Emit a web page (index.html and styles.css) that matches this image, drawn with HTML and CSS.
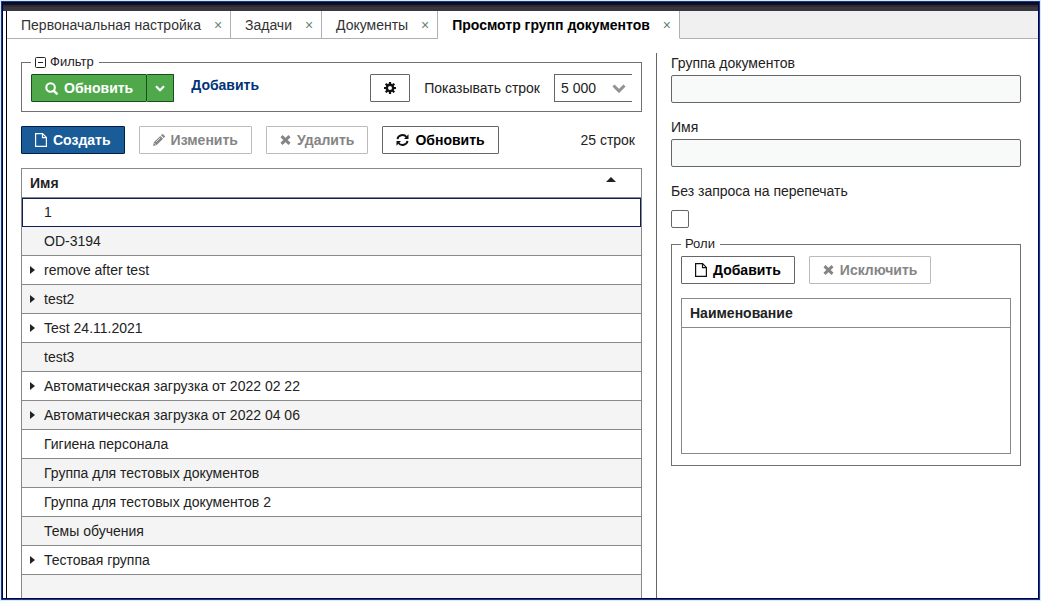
FILE: index.html
```html
<!DOCTYPE html>
<html lang="ru">
<head>
  <meta charset="UTF-8" />
  <meta name="viewport" content="width=device-width, initial-scale=1.0"/>
  <title>Просмотр групп документов</title>
  <link rel="stylesheet" href="styles.css">
</head>
<body>

<div class="window">
  <div class="titlebar"></div>

  <div class="content">
    <nav class="tabs">
      <div class="tab"><a href="#setup">Первоначальная настройка</a><button class="tab-close" aria-label="Закрыть">×</button></div>
      <div class="tab"><a href="#tasks">Задачи</a><button class="tab-close" aria-label="Закрыть">×</button></div>
      <div class="tab"><a href="#docs">Документы</a><button class="tab-close" aria-label="Закрыть">×</button></div>
      <div class="tab active"><a href="#groups">Просмотр групп документов</a><button class="tab-close" aria-label="Закрыть">×</button></div>
      <div class="tabs-rest"></div>
    </nav>

    <main class="main">
      <section class="list-panel">
        <fieldset class="box">
          <legend>
            <svg class="collapse" width="11" height="11" viewBox="0 0 11 11"><rect x="0.5" y="0.5" width="10" height="10" rx="1" fill="none" stroke="#222"/><path d="M3 5.5h5" stroke="#222"/></svg>
            Фильтр
          </legend>
          <div class="filter">
            <div class="split">
              <button class="btn btn-green">
                <svg width="13" height="13" viewBox="0 0 14 14" fill="none" stroke="#fff"><circle cx="6" cy="6" r="4.6" stroke-width="2.2"/><path d="M9.5 9.5L12.6 12.6" stroke-width="2.6" stroke-linecap="round"/></svg>
                Обновить
              </button>
              <button class="btn btn-green btn-drop" aria-label="Ещё">
                <svg width="10" height="7" viewBox="0 0 10 7" fill="none" stroke="#fff" stroke-width="2.2"><path d="M1 1.2l4 4 4-4"/></svg>
              </button>
            </div>
            <a class="add-link" href="#add">Добавить</a>
            <button class="btn btn-gear" aria-label="Настройки">
              <svg width="12" height="12" viewBox="0 0 12 12" fill="none" stroke="#111"><circle cx="6" cy="6" r="3.2" stroke-width="2.4"/><path d="M6 0v2.4M6 9.6V12M0 6h2.4M9.6 6H12M1.7 1.7l1.7 1.7M8.6 8.6l1.7 1.7M1.7 10.3l1.7-1.7M8.6 3.4l1.7-1.7" stroke-width="2.2"/></svg>
            </button>
            <label for="limit">Показывать строк</label>
            <div class="select-wrap">
              <select id="limit">
                <option>5 000</option>
              </select>
              <svg class="select-arrow" width="14" height="9" viewBox="0 0 14 9" fill="none" stroke="#8f938f" stroke-width="3"><path d="M1.5 1.5L7 7l5.5-5.5"/></svg>
            </div>
          </div>
        </fieldset>

        <div class="toolbar">
          <button class="btn btn-blue">
            <svg width="12" height="14" viewBox="0 0 12 14" fill="none" stroke="#fff" stroke-width="1.2"><path d="M.6.6h7L11.4 4.4v9H.6zM7.5.6v4h3.9"/></svg>
            Создать
          </button>
          <button class="btn" disabled>
            <svg width="12" height="12" viewBox="0 0 12 12" fill="#858585"><path d="M0 12l.9-3.7L7.3 1.900l2.8 2.8-6.4 6.4zM8 1.200L9 .2q.5-.4 1 0l1.800 1.800q.4.5 0 1l-1 1z"/><path d="M1.300 9.200l1.500 1.500M3.200 7.800l4-4" stroke="#fff" stroke-width=".7"/></svg>
            Изменить
          </button>
          <button class="btn" disabled>
            <svg width="11" height="10" viewBox="0 0 11 10" stroke="#858585" stroke-width="3"><path d="M1.500 1.200l8 7.600M9.500 1.200l-8 7.600"/></svg>
            Удалить
          </button>
          <button class="btn">
            <svg width="13" height="12" viewBox="0 0 13 12" fill="none" stroke="#111" stroke-width="1.900"><path d="M1.500 5.200A5 4.600 0 0 1 10.500 3M11.500 6.800A5 4.600 0 0 1 2.500 9"/><path d="M12.500.3v4.700H8zM.5 11.700V7H5z" fill="#111" stroke="none"/></svg>
            Обновить
          </button>
          <span class="count">25 строк</span>
        </div>

        <table class="grid">
          <thead>
            <tr><th>Имя <span class="sort"></span></th></tr>
          </thead>
          <tbody>
            <tr class="selected"><td>1</td></tr>
            <tr><td>OD-3194</td></tr>
            <tr class="parent"><td>remove after test</td></tr>
            <tr class="parent"><td>test2</td></tr>
            <tr class="parent"><td>Test 24.11.2021</td></tr>
            <tr><td>test3</td></tr>
            <tr class="parent"><td>Автоматическая загрузка от 2022 02 22</td></tr>
            <tr class="parent"><td>Автоматическая загрузка от 2022 04 06</td></tr>
            <tr><td>Гигиена персонала</td></tr>
            <tr><td>Группа для тестовых документов</td></tr>
            <tr><td>Группа для тестовых документов 2</td></tr>
            <tr><td>Темы обучения</td></tr>
            <tr class="parent"><td>Тестовая группа</td></tr>
            <tr><td></td></tr>
          </tbody>
        </table>
      </section>

      <section class="detail-panel">
        <div class="field">
          <label for="group">Группа документов</label>
          <input type="text" id="group" readonly />
        </div>
        <div class="field">
          <label for="name">Имя</label>
          <input type="text" id="name" readonly />
        </div>
        <div class="field">
          <label for="noask">Без запроса на перепечать</label>
          <input type="checkbox" id="noask" />
        </div>

        <fieldset class="box roles">
          <legend>Роли</legend>
          <div class="toolbar">
            <button class="btn">
              <svg width="12" height="14" viewBox="0 0 12 14" fill="none" stroke="#111" stroke-width="1.2"><path d="M.6.6h7L11.4 4.4v9H.6zM7.5.6v4h3.9"/></svg>
              Добавить
            </button>
            <button class="btn" disabled>
              <svg width="11" height="10" viewBox="0 0 11 10" stroke="#858585" stroke-width="3"><path d="M1.500 1.200l8 7.600M9.500 1.200l-8 7.600"/></svg>
              Исключить
            </button>
          </div>
          <div class="roles-list">
            <table class="roles-grid">
              <thead>
                <tr><th>Наименование</th></tr>
              </thead>
            </table>
          </div>
        </fieldset>
      </section>
    </main>
  </div>
</div>

</body>
</html>
```

FILE: styles.css
```css
* {
  box-sizing: border-box;
}
body {
  margin: 0;
  padding: 1px;
  height: 100vh;
  background-color: #d5eef5;
  color: #222;
  font-family: "Liberation Sans", Arial, sans-serif;
  font-size: 14px;
  line-height: 20px;
}
button, input, select {
  font: inherit;
  color: inherit;
}

/* window frame */
.window {
  display: flex;
  flex-direction: column;
  height: 100%;
  border: 1px solid #1f3a85;
  outline: 1px solid #00004d;
  outline-offset: -2px;
  padding: 1px;
  background-color: #fff;
  overflow: hidden;
}
.titlebar {
  flex: none;
  height: 8px;
  background: linear-gradient(#111116 0 2px, #2c2b33 2px 4px, #38363f 4px);
}
.content {
  flex: 1;
  min-height: 0;
  display: flex;
  flex-direction: column;
  margin-left: 3px;
  border-left: 1px solid #000;
}

/* tabs */
.tabs {
  display: flex;
  height: 28px;
}
.tab {
  display: flex;
  align-items: center;
  gap: 12px;
  padding: 0 7px 0 14px;
  border-right: 1px solid #b0b0b0;
  border-bottom: 1px solid #b0b0b0;
}
.tab a {
  color: #333;
  text-decoration: none;
}
.tab.active {
  border-bottom-color: #fff;
}
.tab.active a {
  color: #000;
  font-weight: bold;
}
.tab-close {
  padding: 0;
  border: none;
  background: none;
  width: 10px;
  color: #6d7f70;
  cursor: pointer;
}
.tabs-rest {
  flex: 1;
  background-color: #f0f0f0;
  border-bottom: 1px solid #b0b0b0;
}

.main {
  flex: 1;
  min-height: 0;
  display: flex;
}
.list-panel {
  flex: 1;
  min-width: 0;
  padding: 15px 14px 0;
  overflow: hidden;
}
.detail-panel {
  width: 382px;
  margin-top: 14px;
  padding: 0 17px 0 14px;
  border-left: 1px solid #666;
}

.box {
  min-width: 0;
  margin: 0;
  padding: 4px 9px 9px;
  border: 1px solid #707070;
}
.box legend {
  display: flex;
  align-items: center;
  gap: 4px;
  padding: 0 5px 0 4px;
  font-size: 13px;
  line-height: 16px;
}

/* buttons */
.btn {
  display: flex;
  align-items: center;
  gap: 6px;
  height: 28px;
  padding: 0 13px;
  border: 1px solid #666;
  border-radius: 1px;
  background-color: #fff;
  color: #000;
  font-weight: bold;
  cursor: pointer;
}
.btn:disabled {
  border-color: #bbb;
  color: #858585;
}
.btn-blue {
  background-color: #1a5c98;
  border-color: #001f4d;
  color: #fff;
}
.btn-green {
  background-color: #4fa94b;
  border-color: #17501a;
  color: #fff;
}
.btn-drop {
  border-left: none;
  padding: 0 8px;
}
.btn-gear {
  width: 40px;
  justify-content: center;
  margin-left: auto;
}
.split {
  display: flex;
}
.filter {
  display: flex;
  align-items: center;
  gap: 14px;
}
.add-link {
  align-self: flex-start;
  margin-left: 3px;
  line-height: 22px;
  color: #003377;
  font-weight: bold;
  text-decoration: none;
}
.select-wrap {
  position: relative;
  width: 78px;
}
.select-wrap select {
  appearance: none;
  display: block;
  width: 100%;
  height: 28px;
  padding: 0 6px;
  border: 1px solid #666;
  border-right: none;
  border-radius: 0;
  background-color: #fff;
}
.select-arrow {
  position: absolute;
  right: 6px;
  top: 10px;
  pointer-events: none;
}
.toolbar {
  display: flex;
  align-items: center;
  gap: 14px;
  margin: 14px 0;
}
.count {
  margin-left: auto;
  margin-right: 7px;
}

/* groups list */
.grid {
  width: 100%;
  border: 1px solid #888;
  border-spacing: 0;
}
.grid th, .grid td {
  height: 29px;
  padding: 0 8px;
  border-bottom: 1px solid #888;
  text-align: left;
}
.grid td {
  padding-left: 22px;
}
.grid tbody tr:nth-child(even) {
  background-color: #f4f4f4;
}
.grid .selected td {
  outline: 1px solid #0d1f55;
  outline-offset: -1px;
  border-bottom-color: #0d1f55;
}
.grid .parent td {
  padding-left: 8px;
}
.parent td::before {
  content: "";
  display: inline-block;
  width: 0;
  margin-right: 9px;
  margin-bottom: 1px;
  border: 4px solid transparent;
  border-left: 5px solid #222;
  border-right: none;
}
.sort {
  float: right;
  margin: 4px 17px 0 0;
  border: 5px solid transparent;
  border-top: none;
  border-bottom: 5px solid #222;
}

/* right side */
.field {
  margin-bottom: 14px;
}
.field label {
  display: block;
}
.field input[type="text"] {
  display: block;
  width: 100%;
  height: 28px;
  margin: 2px 0 0;
  padding: 0 6px;
  border: 1px solid #666;
  border-radius: 2px;
  background-color: #f8faf9;
}
.field input[type="checkbox"] {
  appearance: none;
  display: block;
  width: 18px;
  height: 18px;
  margin: 9px 0 0;
  border: 1px solid #666;
  border-radius: 2px;
  background-color: #fff;
}
.roles {
  margin-top: -6px;
  padding-bottom: 11px;
}
.roles .toolbar {
  margin-top: 0;
}
.roles-list {
  min-height: 156px;
  border: 1px solid #888;
}
.roles-grid {
  width: 100%;
  border-spacing: 0;
}
.roles-grid th {
  height: 29px;
  padding: 0 8px;
  border-bottom: 1px solid #888;
  text-align: left;
}
```
